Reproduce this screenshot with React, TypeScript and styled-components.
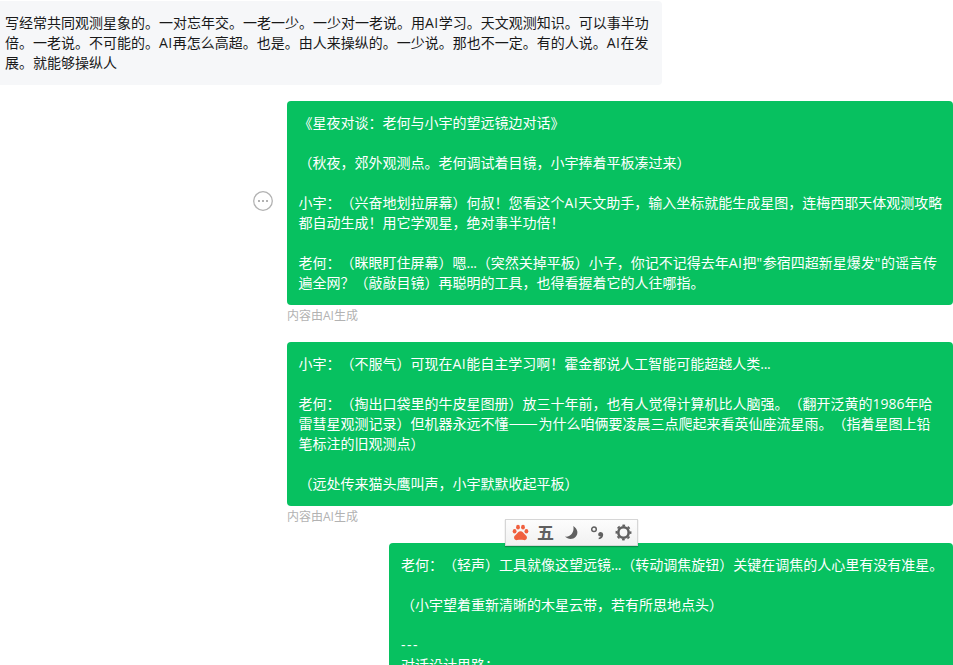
import React from "react";
import styled, { createGlobalStyle } from "styled-components";

const GlobalStyle = createGlobalStyle`
  html, body { margin: 0; padding: 0; background: #fff; overflow: hidden; }
  * { box-sizing: border-box; }
`;

const Page = styled.main`
  position: relative;
  display: flex;
  flex-direction: column;
  width: 953px;
  height: 665px;
  padding-top: 1px;
  overflow: hidden;
  background: #fff;
  font-family: "Open Sans", "Noto Sans CJK SC", sans-serif;
  font-size: 14px;
  line-height: 20px;
  text-spacing-trim: space-all;
`;

const Question = styled.section`
  flex: none;
  width: 662px;
  height: 84px;
  padding: 12px 12px 12px 5px;
  border-radius: 0 4px 4px 0;
  background: #f6f7f9;
  color: #191919;
`;

const Replies = styled.div`
  display: flex;
  flex-direction: column;
  align-items: flex-end;
  margin-top: 16px;
`;

const Reply = styled.div`
  display: flex;
  align-items: center;
  gap: 14px;
`;

const Bubble = styled.article<{ $width: number; $inset?: number }>`
  width: ${(p) => p.$width}px;
  padding: 12px ${(p) => p.$inset ?? 11.5}px;
  border-radius: 4px;
  background: #07c160;
  color: #fff;
`;

const Line = styled.p`
  margin: 0;
  height: 20px;
  white-space: pre;
`;

const Spaced = styled.span<{ $gap: number }>`
  letter-spacing: ${(p) => p.$gap}px;
`;

const Dash = styled.span`
  display: inline-block;
  width: 30px;
  font: 17.5px/0 "Noto Sans CJK SC", sans-serif;
`;

const Note = styled.div`
  width: 666px;
  height: 37px;
  color: #b2b2b2;
  font-size: 12px;
  line-height: 22px;
`;

const MoreButton = styled.button`
  display: flex;
  margin-bottom: 4px;
  padding: 0;
  border: 0;
  background: none;
`;

const InputBar = styled.div`
  position: absolute;
  left: 505px;
  top: 519px;
  display: flex;
  align-items: center;
  justify-content: space-between;
  width: 133px;
  height: 27px;
  padding: 0 5px 0 6px;
  border: 1px solid #d6d6d6;
  background: linear-gradient(#fdfdfd, #f1f1f1);
  box-shadow: 0 1px 1px rgba(0, 0, 0, 0.25);
  color: #606060;

  svg { flex: none; display: block; }
`;

const Mode = styled.span`
  width: 18px;
  margin: -1px 1px 0 -1px;
  font: 700 17px/24px "Noto Sans CJK SC", sans-serif;
`;

const gaps: Record<string, number> = { "...": -0.3, "---": 1.5, AI: 0.5, '"': 0.7 };

function Lines({ rows }: { rows: string[] }) {
  return (
    <>
      {rows.map((row, i) => (
        <Line key={i}>
          {row.split(/(\.\.\.|——|---|AI|")/).map((part, j) => {
            if (part === "——") return <Dash key={j}>{part}</Dash>;
            if (gaps[part]) return <Spaced key={j} $gap={gaps[part]}>{part}</Spaced>;
            return part;
          })}
        </Line>
      ))}
    </>
  );
}

const question = [
  "写经常共同观测星象的。一对忘年交。一老一少。一少对一老说。用AI学习。天文观测知识。可以事半功",
  "倍。一老说。不可能的。AI再怎么高超。也是。由人来操纵的。一少说。那也不一定。有的人说。AI在发",
  "展。就能够操纵人",
];

const first = [
  "《星夜对谈：老何与小宇的望远镜边对话》",
  "",
  "（秋夜，郊外观测点。老何调试着目镜，小宇捧着平板凑过来）",
  "",
  "小宇：（兴奋地划拉屏幕）何叔！您看这个AI天文助手，输入坐标就能生成星图，连梅西耶天体观测攻略",
  "都自动生成！用它学观星，绝对事半功倍！",
  "",
  "老何：（眯眼盯住屏幕）嗯...（突然关掉平板）小子，你记不记得去年AI把\"参宿四超新星爆发\"的谣言传",
  "遍全网？（敲敲目镜）再聪明的工具，也得看握着它的人往哪指。",
];

const second = [
  "小宇：（不服气）可现在AI能自主学习啊！霍金都说人工智能可能超越人类...",
  "",
  "老何：（掏出口袋里的牛皮星图册）放三十年前，也有人觉得计算机比人脑强。（翻开泛黄的1986年哈",
  "雷彗星观测记录）但机器永远不懂——为什么咱俩要凌晨三点爬起来看英仙座流星雨。（指着星图上铅",
  "笔标注的旧观测点）",
  "",
  "（远处传来猫头鹰叫声，小宇默默收起平板）",
];

const third = [
  "老何：（轻声）工具就像这望远镜...（转动调焦旋钮）关键在调焦的人心里有没有准星。",
  "",
  "（小宇望着重新清晰的木星云带，若有所思地点头）",
  "",
  "---",
  "对话设计思路：",
];

export default function App() {
  return (
    <>
      <GlobalStyle />
      <Page>
        <Question><Lines rows={question} /></Question>
        <Replies>
          <Reply>
            <MoreButton aria-label="更多">
              <svg width="20" height="20" viewBox="0 0 20 20">
                <circle cx="10" cy="10" r="9.3" fill="none" stroke="#b2b2b2" strokeWidth="1.3" />
                <path d="M5 9h2v2H5zM9 9h2v2H9zM13 9h2v2h-2z" fill="#b2b2b2" />
              </svg>
            </MoreButton>
            <Bubble $width={666}><Lines rows={first} /></Bubble>
          </Reply>
          <Note>内容由AI生成</Note>
          <Bubble $width={666}><Lines rows={second} /></Bubble>
          <Note>内容由AI生成</Note>
          <Bubble $width={564} $inset={12}><Lines rows={third} /></Bubble>
        </Replies>
        <InputBar>
          <svg width="17" height="17" viewBox="0 0 17 17" fill="#f0603f">
            <ellipse cx="2.6" cy="7.2" rx="1.9" ry="2.2" />
            <ellipse cx="6" cy="3.2" rx="1.9" ry="2.4" />
            <ellipse cx="11" cy="3.2" rx="1.9" ry="2.4" />
            <ellipse cx="14.4" cy="7.2" rx="1.9" ry="2.2" />
            <path d="M8.5 7.2c2.200 0 2.800 1.800 4.200 3.100 1.500 1.300 2.500 2.100 2.200 3.800-.3 1.500-1.500 2.200-3.100 2-1.300-.2-2.200-.4-3.300-.4s-2 .2-3.300.4c-1.600.2-2.800-.5-3.100-2-.3-1.700.7-2.500 2.200-3.800C5.700 9 6.300 7.200 8.500 7.200z" />
          </svg>
          <Mode>五</Mode>
          <svg width="15" height="15" viewBox="0 0 15 15" fill="#606060">
            <path d="M8.300 1c4.600 2.900 5.300 7.800 2.400 10.800C7.900 14.800 3 14.800 0 11.600c3.200.3 5.500-.8 7-3.100C8.500 6.300 8.900 3.600 8.300 1z" />
          </svg>
          <svg width="17" height="17" viewBox="0 0 17 17">
            <circle cx="5" cy="5.300" r="2.300" fill="none" stroke="#606060" strokeWidth="1.500" />
            <path d="M9.200 10.400a2.500 2.500 0 0 1 5 0c0 2.500-1.500 4.300-4.500 4.900v-1.500c1.200-.4 1.700-.9 1.800-1.500-1.400.1-2.300-.7-2.300-1.900z" fill="#606060" />
          </svg>
          <svg width="17" height="17" viewBox="0 0 17 17">
            <circle cx="8.500" cy="8.500" r="5.200" fill="none" stroke="#606060" strokeWidth="2.600" />
            <circle cx="8.500" cy="8.500" r="7.100" fill="none" stroke="#606060" strokeWidth="1.700" strokeDasharray="2.788 2.788" strokeDashoffset="1.394" />
          </svg>
        </InputBar>
      </Page>
    </>
  );
}
